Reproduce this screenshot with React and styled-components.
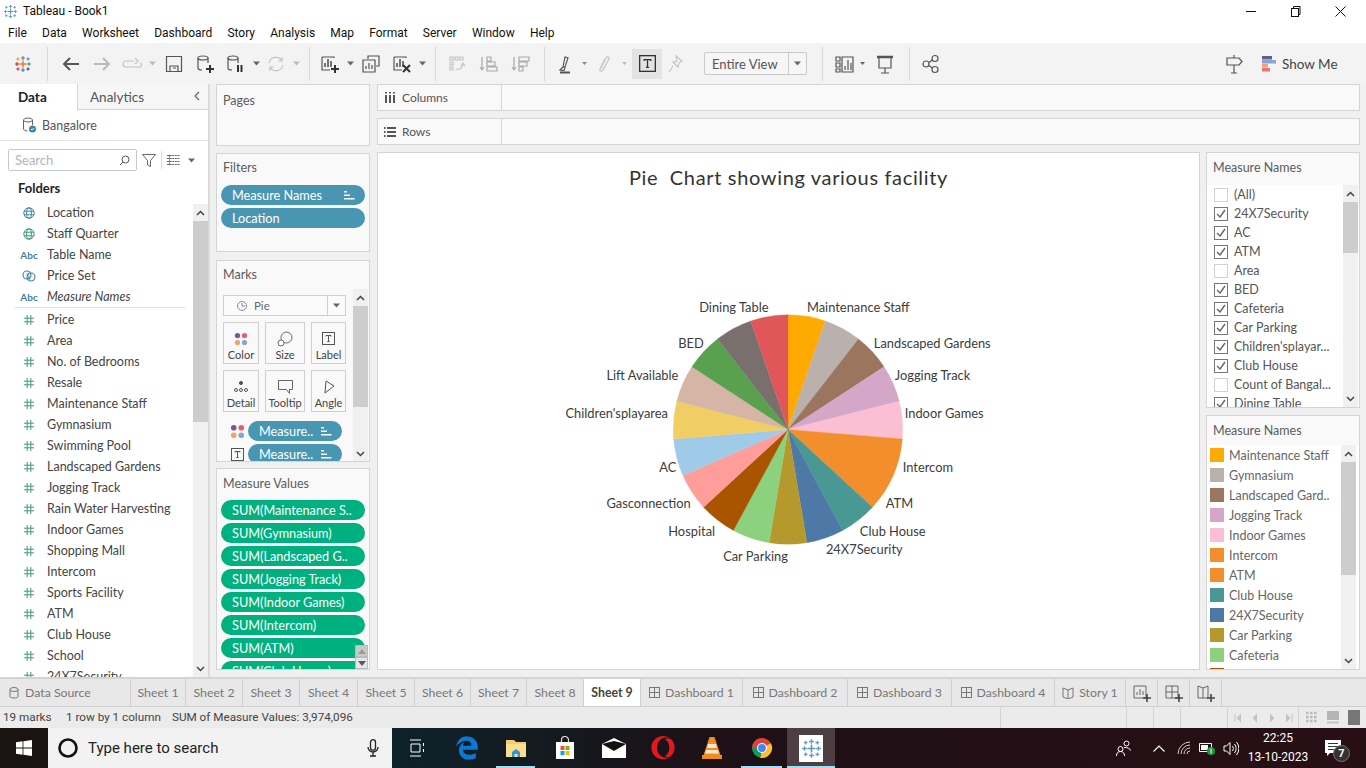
import React from "react";
import styled, { createGlobalStyle } from "styled-components";
import { FaOpera } from "react-icons/fa";
import { FaEdgeLegacy } from "react-icons/fa6";

const SYSTEM = `Roboto, "Open Sans", sans-serif`;
const TAB_FONT = `Lato, "Open Sans", sans-serif`;

const GlobalStyles = createGlobalStyle`
  * {
    box-sizing: border-box;
    margin: 0;
    padding: 0;
  }
  html, body {
    width: 1366px;
    height: 768px;
    overflow: hidden;
    background: #f0f0f0;
    font-family: ${TAB_FONT};
    color: #444;
  }
`;

// ---------- data ----------
const dimensions = [
  { name: "Location", kind: "globe" },
  { name: "Staff Quarter", kind: "globeGreen" },
  { name: "Table Name", kind: "abc" },
  { name: "Price Set", kind: "set" },
  { name: "Measure Names", kind: "abc", italic: true },
];
const measures = [
  "Price", "Area", "No. of Bedrooms", "Resale", "Maintenance Staff", "Gymnasium", "Swimming Pool",
  "Landscaped Gardens", "Jogging Track", "Rain Water Harvesting", "Indoor Games", "Shopping Mall",
  "Intercom", "Sports Facility", "ATM", "Club House", "School", "24X7Security",
];
const measurePills = [
  "SUM(Maintenance S..", "SUM(Gymnasium)", "SUM(Landscaped G..", "SUM(Jogging Track)",
  "SUM(Indoor Games)", "SUM(Intercom)", "SUM(ATM)", "SUM(Club House)",
];
const filterRows = [
  ["(All)", false], ["24X7Security", true], ["AC", true], ["ATM", true], ["Area", false], ["BED", true],
  ["Cafeteria", true], ["Car Parking", true], ["Children'splayar...", true], ["Club House", true],
  ["Count of Bangal...", false], ["Dining Table", true],
];
const legend = [
  ["Maintenance Staff", "#ffaa00"], ["Gymnasium", "#bab0ac"], ["Landscaped Gard..", "#9c755f"],
  ["Jogging Track", "#d4a6c8"], ["Indoor Games", "#fabfd2"], ["Intercom", "#f28e2b"], ["ATM", "#f28e2b"],
  ["Club House", "#499894"], ["24X7Security", "#4e79a7"], ["Car Parking", "#b6992d"], ["Cafeteria", "#8cd17d"],
  ["", "#a95500"],
];
// 19 marks, Intercom and ATM share one colour so they are drawn as a single wedge
const slices = [
  ["#ffaa00", 1], ["#bab0ac", 1], ["#9c755f", 1], ["#d4a6c8", 1], ["#fabfd2", 1], ["#f28e2b", 2], ["#499894", 1],
  ["#4e79a7", 1], ["#b6992d", 1], ["#8cd17d", 1], ["#a95500", 1], ["#ff9d9a", 1], ["#a0cbe8", 1], ["#f1ce63", 1],
  ["#d7b5a6", 1], ["#59a14f", 1], ["#79706e", 1], ["#e15759", 1],
];
const pieLabels = [
  ["Dining Table", 699, 307], ["Maintenance Staff", 807, 307], ["Landscaped Gardens", 874, 343], ["BED", 678, 343],
  ["Jogging Track", 895, 375], ["Lift Available", 606, 375], ["Indoor Games", 905, 413], ["Children'splayarea", 565, 413],
  ["Intercom", 903, 468], ["AC", 659, 468], ["ATM", 886, 504], ["Gasconnection", 606, 504], ["Club House", 860, 532],
  ["Hospital", 668, 532], ["24X7Security", 826, 550], ["Car Parking", 723, 557],
];
const tabs = [
  ["Sheet 1", 55], ["Sheet 2", 57], ["Sheet 3", 57], ["Sheet 4", 58], ["Sheet 5", 57], ["Sheet 6", 56],
  ["Sheet 7", 56], ["Sheet 8", 57],
];
const dashTabs = [["Dashboard 1", 102], ["Dashboard 2", 105], ["Dashboard 3", 104], ["Dashboard 4", 103]];

// ---------- icons ----------
const Cross = ({ x, y, r, c, w = 1.4 }) => (
  <path d={`M${x - r} ${y}H${x + r}M${x} ${y - r}V${y + r}`} stroke={c} strokeWidth={w} fill="none" />
);
const TableauLogo = ({ size = 18, mono }) => {
  const p = (c) => (mono ? "#5b9ac2" : c);
  return (
    <svg width={size} height={size} viewBox="0 0 18 18">
      <Cross x={9} y={9} r={3.5} c={p("#e8762d")} />
      <Cross x={9} y={3} r={2} c={p("#5a7fa0")} w={1.1} />
      <Cross x={9} y={15} r={2} c={p("#5b6fa0")} w={1.1} />
      <Cross x={3} y={9} r={2} c={p("#c72037")} w={1.1} />
      <Cross x={15} y={9} r={2} c={p("#59879b")} w={1.1} />
      <Cross x={4} y={4} r={1.6} c={p("#eb912b")} w={1} />
      <Cross x={14} y={4} r={1.6} c={p("#4e7ea6")} w={1} />
      <Cross x={4} y={14} r={1.6} c={p("#c72037")} w={1} />
      <Cross x={14} y={14} r={1.6} c={p("#1f457e")} w={1} />
    </svg>
  );
};
const Ico = ({ children, w = 20, h = 20, vb = "0 0 20 20", stroke = "#555" }) => (
  <svg width={w} height={h} viewBox={vb} fill="none" stroke={stroke} strokeWidth="1.2">
    {children}
  </svg>
);
const Cylinder = ({ stroke = "#555" }) => (
  <>
    <ellipse cx="8" cy="4" rx="5" ry="2" stroke={stroke} />
    <path d="M3 4v10c0 1.2 2 2 4 2M13 4v5" stroke={stroke} />
  </>
);
const PlusMark = ({ x = 15, y = 15 }) => <path d={`M${x - 4} ${y}h8M${x} ${y - 4}v8`} stroke="#333" strokeWidth="2" />;
const BarsFrame = () => (
  <>
    <path d="M2 3h12v1M2 3v13h8" />
    <path d="M5 13V9M8 13V5M11 13V7" strokeWidth="1.6" />
  </>
);
const SortBars = ({ fill = "#fff" }) => (
  <svg width="11" height="10" viewBox="0 0 11 10">
    <path d="M0 1h3v1.6H0zM0 4.5h6v1.6H0zM0 8h10.5v1.6H0z" fill={fill} />
  </svg>
);
const Four = ({ size = 16 }) => (
  <svg width={size} height={size} viewBox="0 0 16 16">
    <circle cx="4" cy="4" r="3" fill="#6f5f91" />
    <circle cx="12" cy="4" r="3" fill="#ef5a6e" />
    <circle cx="4" cy="12" r="3" fill="#f2a36b" />
    <circle cx="12" cy="12" r="3" fill="#84a6d3" />
  </svg>
);
const TBox = ({ size = 13, stroke = "#555" }) => (
  <svg width={size} height={size} viewBox="0 0 13 13" fill="none" stroke={stroke}>
    <rect x=".5" y=".5" width="12" height="12" />
    <path d="M4 4.5V3.5h5v1M6.5 3.5v6M5.3 9.5h2.4" />
  </svg>
);
const Hash = () => (
  <svg width="10" height="10" viewBox="0 0 10 10" stroke="#3f9a78" strokeWidth="1">
    <path d="M0 3.2h10M0 6.8h10M3.2 0v10M6.8 0v10" />
  </svg>
);
const Globe = ({ c }) => (
  <svg width="12" height="12" viewBox="0 0 12 12" fill="none" stroke={c} strokeWidth="1">
    <circle cx="6" cy="6" r="5.2" />
    <ellipse cx="6" cy="6" rx="2.4" ry="5.2" />
    <path d="M1 4.2h10M1 7.8h10" />
  </svg>
);
const SetIcon = () => (
  <svg width="14" height="12" viewBox="0 0 14 12" fill="none" stroke="#3f7f9f" strokeWidth="1.1">
    <circle cx="5" cy="5" r="4" />
    <circle cx="9" cy="7" r="4" />
    <path d="M6 2.5l2 7M4.5 3.5l3 6" strokeWidth=".7" />
  </svg>
);
const Caret = ({ c = "#777", w = 7 }) => (
  <svg width={w} height="5" viewBox="0 0 7 5">
    <path d="M0 .5h7L3.5 4.5z" fill={c} />
  </svg>
);
const Chevron = ({ down }) => (
  <svg width="9" height="6" viewBox="0 0 9 6" fill="none" stroke="#444" strokeWidth="1.5">
    <path d={down ? "M1 1l3.5 3.5L8 1" : "M1 5l3.5-3.5L8 5"} />
  </svg>
);
const MiniPlus = ({ children }) => (
  <svg width="20" height="18" viewBox="0 0 20 18" fill="none" stroke="#666" strokeWidth="1">
    {children}
    <path d="M11 14h8M15 10v8" stroke="#444" strokeWidth="1.6" />
  </svg>
);
const DashGlyph = () => (
  <svg width="11" height="11" viewBox="0 0 11 11" fill="none" stroke="#777">
    <rect x=".5" y=".5" width="10" height="10" />
    <path d="M5.500 0v11M0 5.500h11" />
  </svg>
);

const Chrome = () => (
  <svg width="24" height="24" viewBox="0 0 24 24">
    <path d="M12 12L2 12A10 10 0 0 1 20.7 7z" fill="#db4437" />
    <path d="M12 12L20.7 7A10 10 0 0 1 10 21.8z" fill="#fbc02d" />
    <path d="M12 12L10 21.8A10 10 0 0 1 2 12z" fill="#0f9d58" />
    <circle cx="12" cy="12" r="5" fill="#fff" />
    <circle cx="12" cy="12" r="3.9" fill="#4285f4" />
  </svg>
);
const Explorer = () => (
  <svg width="22" height="22" viewBox="0 0 22 22">
    <path d="M1 3h8l2 2h10v15H1z" fill="#f5cd68" />
    <path d="M1 7h20v13H1z" fill="#fadf8f" />
    <path d="M7 20v-5l4-3 4 3v5h-2.5v-3h-3v3z" fill="#2f95d6" />
  </svg>
);
const Store = () => (
  <svg width="24" height="24" viewBox="0 0 24 24">
    <path d="M8.500 6V4a3.500 3.500 0 0 1 7 0v2" fill="none" stroke="#ddd" strokeWidth="1.2" />
    <path d="M3 6h18v17H3z" fill="#fff" />
    <path d="M7.500 10h4v4h-4z" fill="#f25022" />
    <path d="M12.500 10h4v4h-4z" fill="#7fba00" />
    <path d="M7.500 15h4v4h-4z" fill="#00a4ef" />
    <path d="M12.500 15h4v4h-4z" fill="#ffb900" />
  </svg>
);
const Mail = () => (
  <svg width="24" height="20" viewBox="0 0 24 20">
    <path d="M0 6L12 0l12 6v14H0z" fill="#fff" />
    <path d="M0 6l12 7 12-7-12-3z" fill="#111" />
  </svg>
);
const Vlc = () => (
  <svg width="22" height="24" viewBox="0 0 22 24">
    <path d="M8.500 1h5l6 18h-17z" fill="#f48b1f" />
    <path d="M7 8h8l1 4H6zM5.200 14h11.600l1 3.500H4.200z" fill="#f3e6d4" />
    <path d="M1 19h20v4H1z" fill="#ef8a1c" />
  </svg>
);

// ---------- layout ----------
const Page = styled.div`
  width: 1366px;
  height: 768px;
  display: flex;
  flex-direction: column;
  overflow: hidden;
`;
const TitleBar = styled.div`
  height: 22px;
  background: #fff;
  display: flex;
  align-items: center;
  padding-left: 3px;
  font: 12px ${SYSTEM};
  color: #111;
  gap: 5px;
`;
const WinButtons = styled.div`
  margin-left: auto;
  padding-right: 3px;
  display: flex;
  align-items: center;
  height: 100%;
`;
const WinButton = styled.div`
  width: 45px;
  height: 100%;
  display: flex;
  align-items: center;
  justify-content: center;
`;
const MenuBar = styled.div`
  height: 21px;
  background: #fff;
  display: flex;
  align-items: center;
  gap: 15.2px;
  padding-left: 8px;
  font: 12px ${SYSTEM};
  color: #111;
`;
const Toolbar = styled.div`
  height: 41px;
  background: #f3f3f3;
  display: flex;
  align-items: center;
  padding-left: 8px;
`;
const Tool = styled.div`
  width: ${(p) => p.$w || 30}px;
  margin-left: ${(p) => p.$ml || 0}px;
  height: 30px;
  flex: none;
  display: flex;
  align-items: center;
  justify-content: center;
  background: ${(p) => (p.$on ? "#e3e3e3" : "transparent")};
`;
const ToolSep = styled.div`
  width: 1px;
  height: 34px;
  background: #d8d8d8;
  flex: none;
  margin-left: ${(p) => p.$ml || 0}px;
`;
const FitSelect = styled.div`
  width: 103px;
  height: 23px;
  margin-left: 14px;
  border: 1px solid #c9c9c9;
  border-radius: 2px;
  display: flex;
  align-items: center;
  font: 13px ${TAB_FONT};
  color: #555;
  background: #f6f6f6;
  flex: none;
`;
const FitText = styled.span`
  flex: 1;
  padding-left: 7px;
`;
const FitArrow = styled.div`
  width: 18px;
  height: 100%;
  border-left: 1px solid #c9c9c9;
  display: flex;
  align-items: center;
  justify-content: center;
`;
const ShowMe = styled.div`
  display: flex;
  align-items: center;
  gap: 6px;
  font: 13.5px ${TAB_FONT};
  color: #444;
  margin-left: 13px;
  width: 97px;
  flex: none;
`;

const Workspace = styled.div`
  height: 593px;
  display: flex;
  background: #f0f0f0;
`;
const DataPane = styled.aside`
  width: 210px;
  background: #fff;
  border-right: 2px solid #dcdcdc;
  display: flex;
  flex-direction: column;
  flex: none;
`;
const PaneTabs = styled.div`
  height: 26px;
  display: flex;
  flex: none;
`;
const DataTab = styled.div`
  width: 77px;
  padding-left: 18px;
  font: 700 13.5px/26px ${TAB_FONT};
  color: #222;
`;
const AnalyticsTab = styled.div`
  flex: 1;
  background: #f6f6f6;
  border-left: 1px solid #d4d4d4;
  border-bottom: 1px solid #d4d4d4;
  padding-left: 12px;
  font: 13.5px/27px ${TAB_FONT};
  color: #555;
  display: flex;
  justify-content: space-between;
  padding-right: 7px;
`;
const SourceRow = styled.div`
  height: 31px;
  flex: none;
  display: flex;
  align-items: center;
  gap: 6px;
  padding-left: 22px;
  font: 12.5px ${TAB_FONT};
  color: #555;
  border-bottom: 1px solid #e6e6e6;
`;
const SearchRow = styled.div`
  height: 30px;
  flex: none;
  padding: 8px 0 0 8px;
  display: flex;
  align-items: center;
  gap: 5px;
`;
const SearchBox = styled.div`
  width: 129px;
  height: 22px;
  border: 1px solid #c8c8c8;
  border-radius: 2px;
  display: flex;
  align-items: center;
  justify-content: space-between;
  padding: 0 6px;
  font: 13px ${TAB_FONT};
  color: #b5b5b5;
`;
const SearchSep = styled.div`
  width: 1px;
  height: 18px;
  background: #ddd;
`;
const CaretSlot = styled.span`
  margin-left: 3px;
  display: flex;
`;
const FoldersHead = styled.div`
  height: 31px;
  flex: none;
  padding: 8px 0 0 18px;
  font: 700 13px/18px ${TAB_FONT};
  color: #222;
`;
const FieldsArea = styled.div`
  flex: 1;
  min-height: 0;
  display: flex;
`;
const FieldList = styled.div`
  flex: 1;
  overflow: hidden;
`;
const FieldRow = styled.div`
  height: 21px;
  display: flex;
  align-items: center;
  font: ${(p) => (p.$italic ? "italic " : "")}12.5px ${TAB_FONT};
  color: #444;
  white-space: nowrap;
`;
const FieldIcon = styled.span`
  width: 47px;
  padding-left: 11px;
  flex: none;
  display: flex;
  justify-content: center;
  font: 700 10px ${TAB_FONT};
  color: #3f7f9f;
`;
const FieldDivider = styled.div`
  height: 2px;
  margin: 0 8px 0 15px;
  border-top: 1px solid #ddd;
`;
const Scroll = styled.div`
  width: ${(p) => p.$w || 15}px;
  flex: none;
  background: #f0f0f0;
  margin-top: ${(p) => p.$mt || 0}px;
  display: flex;
  flex-direction: column;
  margin-right: ${(p) => p.$mr || 0}px;
`;
const ScrollBtn = styled.div`
  height: 17px;
  flex: none;
  display: flex;
  align-items: center;
  justify-content: center;
`;
const ScrollTrack = styled.div`
  flex: 1;
  min-height: 0;
`;
const ScrollThumb = styled.div`
  height: ${(p) => p.$h}px;
  background: #cdcdcd;
`;

const MidColumn = styled.div`
  width: 154px;
  flex: none;
  margin-left: 6px;
  display: flex;
  flex-direction: column;
`;
const Card = styled.section`
  height: ${(p) => p.$h}px;
  margin-bottom: ${(p) => p.$mb || 0}px;
  flex: none;
  border: 1px solid #d4d4d4;
  background: #f9f9f9;
  position: relative;
  overflow: hidden;
`;
const CardTitle = styled.div`
  height: ${(p) => p.$h || 26}px;
  padding: ${(p) => p.$pt || 7}px 0 0 6px;
  font: 12.5px/16px ${TAB_FONT};
  color: #5c5c5c;
`;
const Pills = styled.div`
  display: flex;
  flex-direction: column;
  gap: 3px;
  padding-left: 4px;
`;
const Pill = styled.div`
  height: 20px;
  width: ${(p) => p.$w || 144}px;
  flex: none;
  border-radius: 10px;
  background: ${(p) => p.$bg || "#4996b2"};
  color: #fff;
  font: 12.7px/20px ${TAB_FONT};
  padding: 0 10px 0 11px;
  display: flex;
  align-items: center;
  justify-content: space-between;
  white-space: nowrap;
`;
const MarksBody = styled.div`
  display: flex;
  height: 173px;
`;
const MarksMain = styled.div`
  flex: 1;
  padding: 6px 0 0 6px;
  overflow: hidden;
`;
const MarkSelect = styled.div`
  width: 123px;
  height: 21px;
  border: 1px solid #cfcfcf;
  background: #fbfbfb;
  display: flex;
  align-items: center;
  font: 11.5px ${TAB_FONT};
  color: #666;
  padding-left: 13px;
  gap: 7px;
`;
const MarkArrow = styled.div`
  margin-left: auto;
  width: 18px;
  height: 100%;
  border-left: 1px solid #cfcfcf;
  display: flex;
  align-items: center;
  justify-content: center;
`;
const MarkGrid = styled.div`
  display: grid;
  grid-template-columns: 36px 40px 35px;
  column-gap: 6px;
  row-gap: 6px;
  margin-top: 6px;
`;
const MarkBtn = styled.div`
  height: 42px;
  border: 1px solid #cfcfcf;
  display: flex;
  flex-direction: column;
  align-items: center;
  font: 11px ${TAB_FONT};
  color: #444;
  padding-top: 6px;
  white-space: nowrap;
`;
const MarkGlyph = styled.div`
  height: 19px;
  display: flex;
  align-items: center;
  justify-content: center;
`;
const MarkPills = styled.div`
  margin-top: 9px;
  display: flex;
  flex-direction: column;
  gap: 3px;
`;
const MarkPillRow = styled.div`
  display: flex;
  align-items: center;
  gap: 3px;
  padding-left: 6px;
`;
const MarkPillIcon = styled.div`
  width: 16px;
  display: flex;
  justify-content: center;
`;
const SpinButtons = styled.div`
  position: absolute;
  right: 1px;
  bottom: 0;
  width: 13px;
  display: flex;
  flex-direction: column;
`;
const SpinButton = styled.div`
  height: 12px;
  background: ${(p) => (p.$dim ? "#c9c9c9" : "#e6e6e6")};
  border: 1px solid #bbb;
  display: flex;
  align-items: center;
  justify-content: center;
`;

const Stage = styled.div`
  flex: 1;
  margin-left: 7px;
  margin-right: 6px;
  display: flex;
  flex-direction: column;
  min-width: 0;
`;
const Shelf = styled.div`
  height: 27px;
  margin-bottom: 7px;
  flex: none;
  border: 1px solid #d4d4d4;
  background: #f9f9f9;
  display: flex;
`;
const ShelfLabel = styled.div`
  width: 124px;
  border-right: 1px solid #d4d4d4;
  display: flex;
  align-items: center;
  gap: 6px;
  padding-left: 6px;
  font: 12px ${TAB_FONT};
  color: #555;
`;
const ViewRow = styled.div`
  height: 518px;
  display: flex;
  gap: 6px;
`;
const View = styled.main`
  width: 823px;
  flex: none;
  background: #fff;
  border: 1px solid #d4d4d4;
  display: flex;
  flex-direction: column;
  overflow: hidden;
`;
const ViewTitle = styled.h1`
  height: 51px;
  flex: none;
  padding-top: 11px;
  text-align: center;
  font: 400 20px/26px ${TAB_FONT};
  color: #333;
  white-space: pre;
  letter-spacing: 0.66px;
`;
const ChartSvg = styled.svg`
  flex: 1;
  display: block;
  width: 821px;
  height: 466px;
`;
const ChartLabel = styled.text`
  font: 12.9px ${TAB_FONT};
  fill: #3c3c3c;
`;
const SideColumn = styled.div`
  flex: 1;
  display: flex;
  flex-direction: column;
  gap: 7px;
  min-width: 0;
`;
const SideCard = styled.section`
  height: ${(p) => p.$h}px;
  flex: none;
  border: 1px solid #d4d4d4;
  background: #f9f9f9;
  display: flex;
  flex-direction: column;
`;
const SideTitle = styled.div`
  height: ${(p) => p.$h}px;
  flex: none;
  padding: 7px 0 0 6px;
  font: 12.5px/16px ${TAB_FONT};
  color: #5c5c5c;
`;
const SideBody = styled.div`
  flex: 1;
  min-height: 0;
  display: flex;
  background: #fff;
`;
const SideList = styled.div`
  flex: 1;
  min-width: 0;
  overflow: hidden;
`;
const FilterRow = styled.div`
  height: 19px;
  display: flex;
  align-items: center;
  gap: 6px;
  padding-left: 7px;
  font: 12.5px ${TAB_FONT};
  color: #555;
  white-space: nowrap;
`;
const Check = styled.div`
  width: 14px;
  height: 14px;
  flex: none;
  border: 1px solid ${(p) => (p.$on ? "#777" : "#d2d2d2")};
  display: flex;
  align-items: center;
  justify-content: center;
`;
const LegendRow = styled.div`
  height: 20px;
  display: flex;
  align-items: center;
  gap: 5px;
  padding-left: 3px;
  font: 12.5px ${TAB_FONT};
  color: #666;
  white-space: nowrap;
`;
const Swatch = styled.div`
  width: 14px;
  height: 14px;
  flex: none;
  background: ${(p) => p.$c};
`;

const TabBar = styled.nav`
  height: 30px;
  background: #e8e8e8;
  border-top: 2px solid #d4d4d4;
  display: flex;
  flex: none;
`;
const SheetTab = styled.div`
  width: ${(p) => p.$w}px;
  flex: none;
  display: flex;
  align-items: center;
  justify-content: center;
  gap: 5px;
  border-right: 1px solid #d0d0d0;
  border-bottom: 1px solid #d0d0d0;
  background: ${(p) => (p.$on ? "#fff" : "transparent")};
  font: ${(p) => (p.$on ? 700 : 400)} 12.3px ${TAB_FONT};
  color: ${(p) => (p.$on ? "#444" : "#777")};
  white-space: nowrap;
`;
const SourceTab = styled(SheetTab)`
  justify-content: flex-start;
  padding-left: 9px;
  gap: 6px;
`;
const TabFill = styled.div`
  flex: 1;
  border-bottom: 1px solid #d0d0d0;
`;
const StatusBar = styled.div`
  height: 21px;
  background: #ebebeb;
  display: flex;
  flex: none;
  font: 11.7px/21px ${SYSTEM};
  color: #444;
`;
const StatusMain = styled.div`
  width: 1000px;
  flex: none;
  display: flex;
  padding-left: 3px;
`;
const StatusText = styled.span`
  width: ${(p) => p.$w}px;
  flex: none;
  white-space: nowrap;
`;
const StatusCell = styled.div`
  width: ${(p) => p.$w}px;
  flex: none;
  border-left: 1px solid #d4d4d4;
  display: flex;
  align-items: center;
  justify-content: center;
  gap: ${(p) => p.$gap || 0}px;
`;
const Taskbar = styled.footer`
  height: 40px;
  display: flex;
  flex: none;
  align-items: stretch;
  background: linear-gradient(90deg, #0c2329 392px, #1d1016 720px, #280f15);
  color: #fff;
`;
const StartButton = styled.div`
  width: 48px;
  background: #191412;
  display: flex;
  align-items: center;
  justify-content: center;
`;
const TaskSearch = styled.div`
  width: 344px;
  background: #f2f2f2;
  display: flex;
  align-items: center;
  padding: 0 13px 0 9px;
  font: 15px ${SYSTEM};
  color: #222;
  gap: 9px;
`;
const MicSlot = styled.span`
  margin-left: auto;
  display: flex;
`;
const TaskIcon = styled.div`
  width: ${(p) => p.$w || 49}px;
  flex: none;
  display: flex;
  align-items: center;
  justify-content: center;
  position: relative;
  background: ${(p) => (p.$active ? "#4c3e42" : "transparent")};
  &::after {
    content: "";
    display: ${(p) => (p.$line ? "block" : "none")};
    position: absolute;
    left: ${(p) => (p.$active ? 0 : 4)}px;
    right: ${(p) => (p.$active ? 0 : 5)}px;
    bottom: 0;
    height: 2px;
    background: #a6dcef;
  }
`;
const TableauTile = styled.div`
  width: 24px;
  height: 27px;
  background: #fff;
  display: flex;
  align-items: center;
  justify-content: center;
`;
const Tray = styled.div`
  margin-left: auto;
  padding-right: 9px;
  display: flex;
  align-items: center;
`;
const TrayIcon = styled.div`
  width: ${(p) => p.$w}px;
  flex: none;
  display: flex;
  justify-content: center;
`;
const Clock = styled.div`
  width: 62px;
  flex: none;
  text-align: center;
  font: 12px/19px ${SYSTEM};
`;
const Notify = styled.div`
  width: 48px;
  display: flex;
  justify-content: center;
  position: relative;
`;
const NotifyBadge = styled.span`
  position: absolute;
  left: 24px;
  top: 5px;
  width: 17px;
  height: 17px;
  border-radius: 50%;
  background: #333;
  border: 1px solid #777;
  font: 700 11px/15px ${SYSTEM};
  text-align: center;
  color: #fff;
`;

// ---------- small bits ----------
const VScroll = ({ h, w, mt, mr }) => (
  <Scroll $w={w} $mt={mt} $mr={mr}>
    <ScrollBtn>
      <Chevron />
    </ScrollBtn>
    <ScrollTrack>
      <ScrollThumb $h={h} />
    </ScrollTrack>
    <ScrollBtn>
      <Chevron down />
    </ScrollBtn>
  </Scroll>
);

const fieldIcon = (kind) => {
  if (kind === "globe") return <Globe c="#3f86a8" />;
  if (kind === "globeGreen") return <Globe c="#3f9a78" />;
  if (kind === "set") return <SetIcon />;
  return "Abc";
};

const wedge = (start, span, cx, cy, r) => {
  const step = (Math.PI * 2) / 19;
  const a = start * step;
  const b = (start + span) * step;
  const x1 = (cx + r * Math.sin(a)).toFixed(2);
  const y1 = (cy - r * Math.cos(a)).toFixed(2);
  const x2 = (cx + r * Math.sin(b)).toFixed(2);
  const y2 = (cy - r * Math.cos(b)).toFixed(2);
  return `M${cx} ${cy}L${x1} ${y1}A${r} ${r} 0 0 1 ${x2} ${y2}Z`;
};

const Pie = () => {
  let at = 0;
  return slices.map(([c, span]) => {
    const d = wedge(at, span, 788, 430, 115);
    at += span;
    return <path key={c} d={d} fill={c} stroke={c} strokeWidth=".3" />;
  });
};

const App = () => (
  <Page>
    <GlobalStyles />
    <TitleBar>
      <TableauLogo size={15} mono />
      <span>Tableau - Book1</span>
      <WinButtons>
        <WinButton>
          <svg width="10" height="10" viewBox="0 0 10 10" stroke="#111"><path d="M0 5.500h10" /></svg>
        </WinButton>
        <WinButton>
          <svg width="11" height="11" viewBox="0 0 11 11" stroke="#111" fill="none"><rect x="1.500" y="2.500" width="7" height="8" /><path d="M3.500 2.500v-2h6.500v8H8.500" /></svg>
        </WinButton>
        <WinButton>
          <svg width="11" height="11" viewBox="0 0 11 11" stroke="#111"><path d="M.5.5l10 10M10.500.5l-10 10" /></svg>
        </WinButton>
      </WinButtons>
    </TitleBar>
    <MenuBar>
      {["File", "Data", "Worksheet", "Dashboard", "Story", "Analysis", "Map", "Format", "Server", "Window", "Help"].map((m) => (
        <span key={m}>{m}</span>
      ))}
    </MenuBar>
    <Toolbar>
      <Tool><TableauLogo size={18} /></Tool>
      <ToolSep $ml={9} />
      <Tool $ml={7} $w={31}><Ico><path d="M18 10H3M9 4l-6 6 6 6" strokeWidth="2" stroke="#555" /></Ico></Tool>
      <Tool $w={31}><Ico><path d="M2 10h15M11 4l6 6-6 6" strokeWidth="2" stroke="#bbb" /></Ico></Tool>
      <Tool $w={29}><Ico stroke="#c4c4c4"><path d="M12 7H4a3 3 0 0 0 0 6h13a2 2 0 0 0 1-4M13 4l3 3-3 3" /></Ico></Tool>
      <Tool $w={12}><Caret c="#bbb" /></Tool>
      <Tool $w={31}><Ico><path d="M2.500 2.500h15v15h-15zM6 17v-5h8v5M9 14h3" /></Ico></Tool>
      <Tool $w={31}><Ico><Cylinder /><PlusMark /></Ico></Tool>
      <Tool $w={30}><Ico><Cylinder /><path d="M13 11v7M16.500 11v7" stroke="#333" strokeWidth="2" /></Ico></Tool>
      <Tool $w={12}><Caret c="#666" /></Tool>
      <Tool $w={28}><Ico stroke="#c4c4c4"><path d="M3 9a7 7 0 0 1 13-2M17 11a7 7 0 0 1-13 2M16 3v4h-4M4 17v-4h4" /></Ico></Tool>
      <Tool $w={12}><Caret c="#bbb" /></Tool>
      <ToolSep $ml={7} />
      <Tool $ml={5}><Ico><BarsFrame /><PlusMark /></Ico></Tool>
      <Tool $w={10}><Caret c="#666" /></Tool>
      <Tool $w={32}><Ico><path d="M7 5V2h11v10h-3M2 6h12v12H2z" /><path d="M5 15v-3M8 15V9M11 15v-4" /></Ico></Tool>
      <Tool><Ico><BarsFrame /><path d="M11 11l7 7M18 11l-7 7" stroke="#333" strokeWidth="2" /></Ico></Tool>
      <Tool $w={10}><Caret c="#666" /></Tool>
      <ToolSep $ml={8} />
      <Tool $ml={6}><Ico stroke="#c4c4c4"><path d="M3 3h3v3H3zM8 3h3v3H8zM13 3h3v3h-3zM3 8h3v3H3zM3 13h3v3H3zM9 15c4 1 7-1 7-6M14 12l2-3 2 3" /></Ico></Tool>
      <Tool $w={32}><Ico stroke="#aaa"><path d="M4 3v13M2 13l2 3 2-3M9 3h4v4H9zM9 8h8v4H9zM9 13h10v4H9z" /></Ico></Tool>
      <Tool $w={32}><Ico stroke="#aaa"><path d="M4 3v13M2 13l2 3 2-3M9 3h10v4H9zM9 8h8v4H9zM9 13h4v4H9z" /></Ico></Tool>
      <ToolSep $ml={8} />
      <Tool $ml={6}><Ico><path d="M7 13l2-10 3 1-3 9zM4 16l3-3 2 .5-1 3z" /><path d="M4 18.500h10" strokeWidth="2" /></Ico></Tool>
      <Tool $w={6}><Caret c="#888" w={5} /></Tool>
      <Tool $ml={2}><Ico stroke="#c4c4c4"><path d="M7 14l5-10c1-2 4-1 3 1l-6 11c-1 2-4 1-3-1l5-10" /></Ico></Tool>
      <Tool $w={10}><Caret c="#bbb" w={5} /></Tool>
      <Tool $ml={3} $on><TBox size={17} stroke="#333" /></Tool>
      <Tool $w={28}><Ico stroke="#c4c4c4"><path d="M10 2l6 5-3 2-1 4-5-5 4-1zM7 12l-4 6" /></Ico></Tool>
      <FitSelect>
        <FitText>Entire View</FitText>
        <FitArrow><Caret c="#666" /></FitArrow>
      </FitSelect>
      <ToolSep $ml={15} />
      <Tool $ml={7}><Ico><path d="M1 3h4v4H1zM1 9h4v4H1zM1 15h4v3H1zM7 3h11v15H7zM10 16v-4M13 16V6M16 16v-7" /></Ico></Tool>
      <Tool $w={10} $ml={-3}><Caret c="#666" w={5} /></Tool>
      <Tool $ml={3}><Ico><path d="M2 3h16M4 3v11h12V3M10 14v5M6 19h8" /><path d="M2 3h16" strokeWidth="2.500" /></Ico></Tool>
      <ToolSep $ml={9} />
      <Tool $ml={6}><Ico><circle cx="5" cy="10" r="3" /><circle cx="14" cy="4.500" r="3" /><circle cx="14" cy="15.500" r="3" /><path d="M8 8.500l3.500-2.500M8 11.500l3.500 2.500" /></Ico></Tool>
      <Tool $ml={273}><Ico><path d="M10 1v3M3 4h12l3 3.500-3 3.500H3zM10 11v8M7 19h6" /></Ico></Tool>
      <ShowMe>
        <svg width="14" height="16" viewBox="0 0 14 16">
          <path d="M0 0h10v3.500H0z" fill="#6b5b8d" />
          <path d="M0 4h14v3.500H0z" fill="#84a6d3" />
          <path d="M0 8h6v3.500H0z" fill="#f2a36b" />
          <path d="M0 12h8v3.500H0z" fill="#ef6f7e" />
        </svg>
        <span>Show Me</span>
      </ShowMe>
    </Toolbar>

    <Workspace>
      <DataPane>
        <PaneTabs>
          <DataTab>Data</DataTab>
          <AnalyticsTab>
            <span>Analytics</span>
            <svg width="8" height="24" viewBox="0 0 8 24" fill="none" stroke="#666" strokeWidth="1.2"><path d="M6 8l-4 4 4 4" /></svg>
          </AnalyticsTab>
        </PaneTabs>
        <SourceRow>
          <svg width="14" height="16" viewBox="0 0 14 16" fill="none" stroke="#666">
            <ellipse cx="6" cy="3" rx="4.500" ry="2" />
            <path d="M1.500 3v9c0 1 2 2 4 2M10.500 3v5" />
            <circle cx="10.500" cy="12" r="3.500" fill="#3f86a8" stroke="none" />
            <path d="M9 12l1 1 2-2" stroke="#fff" />
          </svg>
          <span>Bangalore</span>
        </SourceRow>
        <SearchRow>
          <SearchBox>
            <span>Search</span>
            <svg width="11" height="11" viewBox="0 0 11 11" fill="none" stroke="#555"><circle cx="6.500" cy="4.500" r="3.500" /><path d="M4 7L1 10" /></svg>
          </SearchBox>
          <svg width="14" height="13" viewBox="0 0 14 13" fill="none" stroke="#666"><path d="M.5.5h13L8.500 6.500v6l-3-1.500V6.500z" /></svg>
          <SearchSep />
          <svg width="13" height="10" viewBox="0 0 13 10" stroke="#666"><path d="M0 .5h13M0 3.500h13M0 6.500h13M0 9.500h13M2.500 0v10" strokeDasharray="2 .6" /></svg>
          <CaretSlot><Caret c="#666" /></CaretSlot>
        </SearchRow>
        <FoldersHead>Folders</FoldersHead>
        <FieldsArea>
          <FieldList>
            {dimensions.map((d) => (
              <FieldRow key={d.name} $italic={d.italic}>
                <FieldIcon>{fieldIcon(d.kind)}</FieldIcon>
                {d.name}
              </FieldRow>
            ))}
            <FieldDivider />
            {measures.map((m) => (
              <FieldRow key={m}>
                <FieldIcon><Hash /></FieldIcon>
                {m}
              </FieldRow>
            ))}
          </FieldList>
          <VScroll h={201} mt={2} />
        </FieldsArea>
      </DataPane>

      <MidColumn>
        <Card $h={62} $mb={7}>
          <CardTitle $pt={8}>Pages</CardTitle>
        </Card>
        <Card $h={99} $mb={8}>
          <CardTitle $h={31} $pt={6}>Filters</CardTitle>
          <Pills>
            <Pill>Measure Names <SortBars /></Pill>
            <Pill>Location</Pill>
          </Pills>
        </Card>
        <Card $h={202} $mb={6}>
          <CardTitle $h={28} $pt={6}>Marks</CardTitle>
          <MarksBody>
            <MarksMain>
              <MarkSelect>
                <svg width="10" height="10" viewBox="0 0 10 10" fill="none" stroke="#888"><circle cx="5" cy="5" r="4.500" /><path d="M5 2v3h3" /></svg>
                <span>Pie</span>
                <MarkArrow><Caret c="#666" /></MarkArrow>
              </MarkSelect>
              <MarkGrid>
                <MarkBtn><MarkGlyph><Four size={14} /></MarkGlyph>Color</MarkBtn>
                <MarkBtn>
                  <MarkGlyph>
                    <svg width="16" height="16" viewBox="0 0 16 16" fill="none" stroke="#666"><circle cx="9.500" cy="6.500" r="5.500" /><circle cx="4" cy="12" r="3" fill="#fff" /></svg>
                  </MarkGlyph>
                  Size
                </MarkBtn>
                <MarkBtn><MarkGlyph><TBox /></MarkGlyph>Label</MarkBtn>
                <MarkBtn>
                  <MarkGlyph>
                    <svg width="14" height="12" viewBox="0 0 14 12" fill="none" stroke="#555"><circle cx="7" cy="2" r="1.600" fill="#555" /><circle cx="2" cy="9" r="1.500" /><circle cx="7" cy="9" r="1.500" /><circle cx="12" cy="9" r="1.500" /></svg>
                  </MarkGlyph>
                  Detail
                </MarkBtn>
                <MarkBtn>
                  <MarkGlyph>
                    <svg width="15" height="14" viewBox="0 0 15 14" fill="none" stroke="#666"><path d="M.5.5h14v9h-3v4l-3-4H.5z" /></svg>
                  </MarkGlyph>
                  Tooltip
                </MarkBtn>
                <MarkBtn>
                  <MarkGlyph>
                    <svg width="12" height="14" viewBox="0 0 12 14" fill="none" stroke="#555"><path d="M2 13L3 1l8 5z" /></svg>
                  </MarkGlyph>
                  Angle
                </MarkBtn>
              </MarkGrid>
              <MarkPills>
                <MarkPillRow>
                  <MarkPillIcon><Four size={15} /></MarkPillIcon>
                  <Pill $w={94}>Measure.. <SortBars /></Pill>
                </MarkPillRow>
                <MarkPillRow>
                  <MarkPillIcon><TBox /></MarkPillIcon>
                  <Pill $w={94}>Measure.. <SortBars /></Pill>
                </MarkPillRow>
              </MarkPills>
            </MarksMain>
            <VScroll h={101} mr={1} />
          </MarksBody>
        </Card>
        <Card $h={202}>
          <CardTitle $h={31}>Measure Values</CardTitle>
          <Pills>
            {measurePills.map((m) => (
              <Pill key={m} $bg="#00b180">{m}</Pill>
            ))}
          </Pills>
          <SpinButtons>
            <SpinButton $dim><svg width="8" height="5"><path d="M0 5L4 0l4 5z" fill="#999" /></svg></SpinButton>
            <SpinButton><svg width="8" height="5"><path d="M0 0l4 5 4-5z" fill="#556" /></svg></SpinButton>
          </SpinButtons>
        </Card>
      </MidColumn>

      <Stage>
        <Shelf>
          <ShelfLabel>
            <svg width="12" height="11" viewBox="0 0 12 11" stroke="#555" strokeWidth="2"><path d="M2 3v8M6 3v8M10 3v8" /><path d="M2 0v1.500M6 0v1.500M10 0v1.500" /></svg>
            Columns
          </ShelfLabel>
        </Shelf>
        <Shelf>
          <ShelfLabel>
            <svg width="12" height="10" viewBox="0 0 12 10" stroke="#555" strokeWidth="2"><path d="M3 1h9M3 5h9M3 9h9M0 1h1.500M0 5h1.500M0 9h1.500" /></svg>
            Rows
          </ShelfLabel>
        </Shelf>
        <ViewRow>
          <View>
            <ViewTitle>Pie  Chart showing various facility</ViewTitle>
            <ChartSvg viewBox="378 204 821 466">
              <Pie />
              {pieLabels.map(([t, x, y]) => (
                <ChartLabel key={t} x={x} y={y + 5}>{t}</ChartLabel>
              ))}
            </ChartSvg>
          </View>
          <SideColumn>
            <SideCard $h={256}>
              <SideTitle $h={32}>Measure Names</SideTitle>
              <SideBody>
                <SideList>
                  {filterRows.map(([t, on]) => (
                    <FilterRow key={t}>
                      <Check $on={on}>
                        {on && <svg width="10" height="9" viewBox="0 0 10 9" fill="none" stroke="#666" strokeWidth="1.400"><path d="M1 5l3 3 5-7" /></svg>}
                      </Check>
                      {t}
                    </FilterRow>
                  ))}
                </SideList>
                <VScroll h={51} mr={1} />
              </SideBody>
            </SideCard>
            <SideCard $h={255}>
              <SideTitle $h={29}>Measure Names</SideTitle>
              <SideBody>
                <SideList>
                  {legend.map(([t, c], i) => (
                    <LegendRow key={i}>
                      <Swatch $c={c} />
                      {t}
                    </LegendRow>
                  ))}
                </SideList>
                <VScroll h={113} mr={3} />
              </SideBody>
            </SideCard>
          </SideColumn>
        </ViewRow>
      </Stage>
    </Workspace>

    <TabBar>
      <SourceTab $w={131}>
        <svg width="10" height="12" viewBox="0 0 10 12" fill="none" stroke="#777"><ellipse cx="5" cy="2.500" rx="4" ry="2" /><path d="M1 2.500v7c0 2 8 2 8 0v-7" /></svg>
        Data Source
      </SourceTab>
      {tabs.map(([t, w]) => (
        <SheetTab key={t} $w={w}>{t}</SheetTab>
      ))}
      <SheetTab $w={57} $on>Sheet 9</SheetTab>
      {dashTabs.map(([t, w]) => (
        <SheetTab key={t} $w={w}><DashGlyph />{t}</SheetTab>
      ))}
      <SheetTab $w={71}>
        <svg width="12" height="12" viewBox="0 0 12 12" fill="none" stroke="#777"><path d="M1 1l5 2 5-2v9l-5 2-5-2zM6 3v9" /></svg>
        Story 1
      </SheetTab>
      <SheetTab $w={32}><MiniPlus><path d="M2 2h12v12H2zM5 11V8M8 11V5M11 11V7" /></MiniPlus></SheetTab>
      <SheetTab $w={32}><MiniPlus><path d="M2 2h12v12H2zM8 2v12M2 8h12" /></MiniPlus></SheetTab>
      <SheetTab $w={32}><MiniPlus><path d="M2 2l5 2 5-2v12H2zM7 4v10" /></MiniPlus></SheetTab>
      <TabFill />
    </TabBar>
    <StatusBar>
      <StatusMain>
        <StatusText $w={63}>19 marks</StatusText>
        <StatusText $w={106}>1 row by 1 column</StatusText>
        <StatusText $w={200}>SUM of Measure Values: 3,974,096</StatusText>
      </StatusMain>
      <StatusCell $w={126} />
      <StatusCell $w={27} />
      <StatusCell $w={27} />
      <StatusCell $w={47} />
      <StatusCell $w={71} $gap={9}>
        {["M1 0v8M7 0L3 4l4 4", "M6 0L2 4l4 4", "M2 0l4 4-4 4", "M1 0l4 4-4 4M7 0v8"].map((d) => (
          <svg key={d} width="8" height="8" viewBox="0 0 8 8"><path d={d} fill="#c4c4c4" stroke="#c4c4c4" /></svg>
        ))}
      </StatusCell>
      <StatusCell $w={68} $gap={9}>
        <svg width="12" height="13" viewBox="0 0 12 13" stroke="#bbb" strokeWidth="2.600" strokeDasharray="2.600 1.400"><path d="M0 2h12M0 6h12M0 10h12" /></svg>
        <svg width="12" height="13" viewBox="0 0 12 13"><path d="M0 0h12v9H0z" fill="#b5b5b5" /><path d="M0 10.500h12v2H0z" fill="#c4c4c4" /></svg>
        <svg width="12" height="15" viewBox="0 0 12 15"><path d="M0 0h12v15H0z" fill="#777" /></svg>
      </StatusCell>
    </StatusBar>
    <Taskbar>
      <StartButton>
        <svg width="16" height="16" viewBox="0 0 16 16" fill="#fff"><path d="M0 2.200L6.600 1.300v6.300H0zM7.400 1.200L16 0v7.600H7.400zM0 8.400h6.600v6.300L0 13.800zM7.400 8.400H16V16l-8.600-1.200z" /></svg>
      </StartButton>
      <TaskSearch>
        <svg width="22" height="22" viewBox="0 0 22 22" fill="none" stroke="#111" strokeWidth="2.600"><circle cx="11" cy="11" r="8.500" /></svg>
        <span>Type here to search</span>
        <MicSlot>
          <svg width="12" height="18" viewBox="0 0 12 18" fill="none" stroke="#222" strokeWidth="1.300"><rect x="3.500" y=".7" width="5" height="10.500" rx="2.500" /><path d="M1 8a5 5 0 0 0 10 0M6 13v4M3 17h6" /></svg>
        </MicSlot>
      </TaskSearch>
      <TaskIcon>
        <svg width="16" height="18" viewBox="0 0 16 18" fill="none" stroke="#fff"><path d="M1 1h11M1 17h11M2 5h9v8H2z" /><path d="M14.500 4v3M14.500 10v3" /></svg>
      </TaskIcon>
      <TaskIcon $w={51}><FaEdgeLegacy size={24} color="#0a78d4" /></TaskIcon>
      <TaskIcon $w={48} $line><Explorer /></TaskIcon>
      <TaskIcon><Store /></TaskIcon>
      <TaskIcon><Mail /></TaskIcon>
      <TaskIcon><FaOpera size={24} color="#e0191f" /></TaskIcon>
      <TaskIcon $w={50}><Vlc /></TaskIcon>
      <TaskIcon $line $w={50}><Chrome /></TaskIcon>
      <TaskIcon $active $line $w={48}>
        <TableauTile>
          <TableauLogo size={21} mono />
        </TableauTile>
      </TaskIcon>
      <Tray>
        <TrayIcon $w={52}>
          <svg width="15" height="16" viewBox="0 0 15 16" fill="none" stroke="#fff"><circle cx="4.500" cy="9" r="2.500" /><circle cx="10.500" cy="3.500" r="2.500" /><path d="M.5 16c0-3 1.500-4.500 4-4.500s4 1.500 4 4.500M8 7.500c3 0 6 .5 6.500 3" /></svg>
        </TrayIcon>
        <TrayIcon $w={20}>
          <svg width="12" height="7" viewBox="0 0 12 7" fill="none" stroke="#fff" strokeWidth="1.200"><path d="M.5 6.500L6 1l5.500 5.500" /></svg>
        </TrayIcon>
        <TrayIcon $w={30}>
          <svg width="14" height="14" viewBox="0 0 14 14" fill="none" stroke="#ccc"><path d="M1 13a12 12 0 0 1 12-12M4 13a9 9 0 0 1 9-9M7 13a6 6 0 0 1 6-6M10 13a3 3 0 0 1 3-3" /></svg>
        </TrayIcon>
        <TrayIcon $w={16}>
          <svg width="16" height="14" viewBox="0 0 16 14"><path d="M.5 2.500h12v8H.5z" fill="none" stroke="#fff" /><path d="M2 4h7v5H2z" fill="#fff" /><circle cx="12" cy="10" r="4" fill="#1a9c3e" /><path d="M12 7.500v5" stroke="#fff" /></svg>
        </TrayIcon>
        <TrayIcon $w={32}>
          <svg width="16" height="15" viewBox="0 0 16 15" fill="none" stroke="#fff"><path d="M1 5h2.500L7 1.500v12L3.500 10H1zM9.500 5a4 4 0 0 1 0 5M11.500 3a7 7 0 0 1 0 9M13.500 1a10 10 0 0 1 0 13" /></svg>
        </TrayIcon>
        <Clock>22:25<br />13-10-2023</Clock>
        <Notify>
          <svg width="16" height="16" viewBox="0 0 16 16"><path d="M0 0h16v13H5l-3 3v-3H0z" fill="#fff" /><path d="M3 3.500h10M3 6.500h10M3 9.500h7" stroke="#333" /></svg>
          <NotifyBadge>7</NotifyBadge>
        </Notify>
      </Tray>
    </Taskbar>
  </Page>
);

export default App;
